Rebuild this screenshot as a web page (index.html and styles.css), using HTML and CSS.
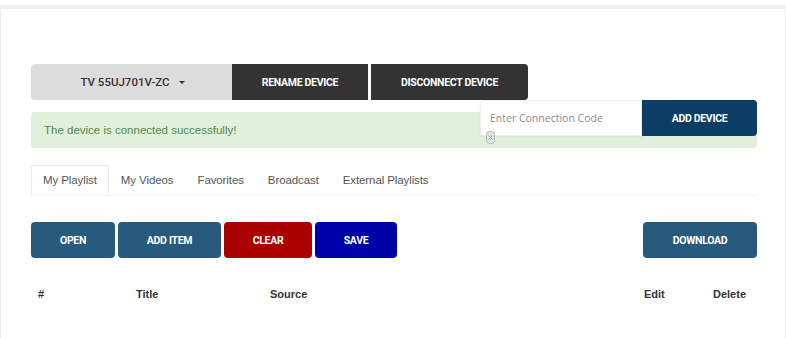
FILE: index.html
```
<!DOCTYPE html>
<html lang="en">

<head>
    <meta charset="UTF-8">
    <meta name="viewport" content="width=device-width, initial-scale=1.0">
    <title>Playlist Manager</title>
    <link rel="stylesheet" href="styles.css">
</head>

<body>

    <div class="topbar"></div>

    <section class="page">

        <div class="device-area">
            <div class="device-group">
                <button class="device-select">TV 55UJ701V-ZC <span class="caret"></span></button>
                <button class="btn-dark">RENAME DEVICE</button>
                <button class="btn-dark last">DISCONNECT DEVICE</button>
            </div>

            <div class="alert-success">The device is connected successfully!</div>

            <!-- connection code box sits over the alert -->
            <div class="connect-group">
                <input type="text" placeholder="Enter Connection Code">
                <button class="btn-add">ADD DEVICE</button>
                <svg class="clear-icon" width="9" height="13" viewBox="0 0 9 13">
                    <rect x="0.5" y="0.5" width="8" height="12" rx="3" fill="#e4e4e4" stroke="#b8b8b8" />
                    <path d="M2.5 4.5 L6.5 8.5 M6.5 4.5 L2.5 8.5" stroke="#9a9a9a" stroke-width="1" />
                </svg>
            </div>
        </div>

        <ul class="tabs">
            <li class="active">My Playlist</li>
            <li>My Videos</li>
            <li>Favorites</li>
            <li>Broadcast</li>
            <li>External Playlists</li>
        </ul>

        <div class="actions">
            <div class="actions-left">
                <button class="btn btn-blue w-open">OPEN</button>
                <button class="btn btn-blue w-add">ADD ITEM</button>
                <button class="btn btn-red w-clear">CLEAR</button>
                <button class="btn btn-navy w-save">SAVE</button>
            </div>
            <button class="btn btn-blue w-download">DOWNLOAD</button>
        </div>

        <table class="playlist">
            <thead>
                <tr>
                    <th class="col-num">#</th>
                    <th class="col-title">Title</th>
                    <th class="col-source">Source</th>
                    <th class="col-edit">Edit</th>
                    <th class="col-delete">Delete</th>
                </tr>
            </thead>
        </table>

    </section>

</body>

</html>
```

FILE: styles.css
```
body, html {
    margin: 0;
    padding: 0;
    height: 100%;
    background: #fff;
    font-family: 'Liberation Sans', Arial, sans-serif;
    overflow: hidden;
}

.topbar {
    margin-top: 5px;
    height: 4px;
    background-color: #efefef;
}

.page {
    height: 329px;
    border-left: 1px solid #ececec;
    border-right: 1px solid #ececec;
    padding: 0 28px 0 30px;
}

button {
    font-family: 'Roboto', sans-serif;
    font-weight: 700;
    font-size: 10.5px;
    letter-spacing: -0.3px;
    border: none;
    outline: none;
    cursor: pointer;
    color: #fff;
    padding: 0;
}

/* device row */
.device-area {
    position: relative;
    padding-top: 55px;
}

.device-group {
    display: flex;
    height: 36px;
}

.device-select {
    width: 201px;
    background-color: #dcdcdc;
    color: #333;
    border-radius: 4px 0 0 4px;
    font-size: 11.5px;
    font-weight: 500;
    letter-spacing: 0;
    padding-left: 2px;
}

.caret {
    display: inline-block;
    width: 0;
    height: 0;
    margin-left: 6px;
    vertical-align: middle;
    border-top: 3px solid #333;
    border-left: 3px solid transparent;
    border-right: 3px solid transparent;
}

.btn-dark {
    width: 136px;
    background-color: #333334;
    margin-right: 3px;
}

.btn-dark.last {
    width: 157px;
    margin-right: 0;
    border-radius: 0 4px 4px 0;
}

.alert-success {
    margin-top: 12px;
    height: 36px;
    line-height: 36px;
    padding-left: 13px;
    background-color: #e0f0da;
    color: #4f8a4c;
    font-size: 11.5px;
    border-radius: 3px;
}

.connect-group {
    position: absolute;
    top: 91px;
    right: 0;
    display: flex;
    height: 36px;
}

.connect-group input {
    width: 162px;
    height: 36px;
    box-sizing: border-box;
    margin: 0;
    padding: 0 9px;
    border: 1px solid #f0f0f0;
    border-radius: 4px 0 0 4px;
    background: #fff;
    font-family: 'Open Sans', sans-serif;
    font-size: 10.5px;
    color: #333;
    outline: none;
    box-shadow: 0 1px 3px rgba(0, 0, 0, 0.06);
}

.connect-group input::placeholder {
    color: #8a8a8a;
}

.btn-add {
    width: 115px;
    background-color: #0c3d64;
    border-radius: 0 4px 4px 0;
}

.clear-icon {
    position: absolute;
    left: 6px;
    top: 31px;
}

/* tabs */
.tabs {
    list-style: none;
    margin: 17px 0 0 0;
    padding: 0;
    display: flex;
    height: 30px;
    border-bottom: 1px solid #f2f2f2;
}

.tabs li {
    padding: 0 11px;
    line-height: 29px;
    font-size: 11.5px;
    color: #555;
    letter-spacing: -0.1px;
    border: 1px solid transparent;
    border-bottom: none;
}

.tabs li.active {
    border-color: #ebebeb;
    border-radius: 3px 3px 0 0;
    background: #fff;
}

/* action buttons */
.actions {
    display: flex;
    justify-content: space-between;
    margin-top: 26px;
    height: 36px;
}

.actions-left {
    display: flex;
    gap: 3px;
}

.btn {
    height: 36px;
    border-radius: 4px;
}

.btn-blue {
    background-color: #285a7e;
}

.btn-red {
    background-color: #a90000;
}

.btn-navy {
    background-color: #0000a8;
}

.w-open { width: 84px; }
.w-add { width: 103px; }
.w-clear { width: 88px; }
.w-save { width: 82px; }
.w-download { width: 114px; }

/* table */
.playlist {
    width: 100%;
    margin-top: 25px;
    border-collapse: collapse;
}

.playlist th {
    font-size: 11px;
    font-weight: 700;
    color: #333;
    text-align: left;
    padding: 0;
    height: 22px;
}

.col-num { padding-left: 7px !important; width: 98px; }
.col-title { width: 134px; }
.col-source { width: 374px; }
.col-edit { width: 69px; }
```
